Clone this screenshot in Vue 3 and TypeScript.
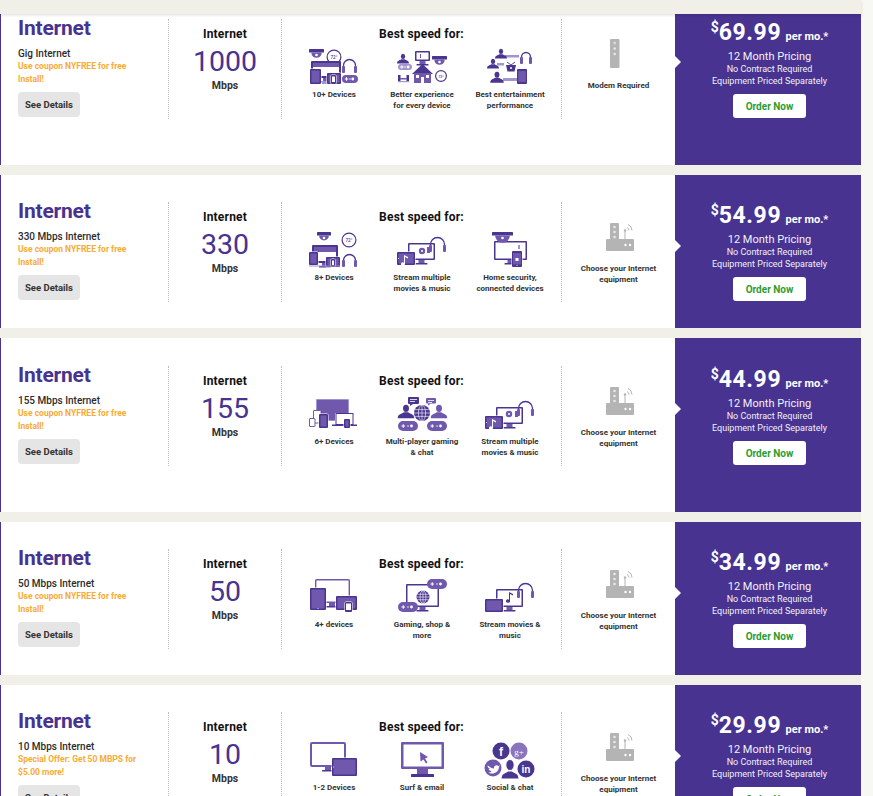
<script setup lang="ts">
type Use = { icon: string; label: string[] }
type Plan = {
  name: string
  offer: string[]
  speed: string
  uses: Use[]
  modem: boolean
  price: string
  tall?: boolean
}

const D = '#4a3590'
const M = '#7058ad'
const L = '#a294cc'
const W = '#fff'
const G = '#b4b4b4'

const r = (x: number, y: number, w: number, h: number, f = D, rx = 0) =>
  `<rect x="${x}" y="${y}" width="${w}" height="${h}" rx="${rx}" fill="${f}"/>`
const c = (x: number, y: number, rad: number, f = D) => `<circle cx="${x}" cy="${y}" r="${rad}" fill="${f}"/>`

const stand = (cx: number, y: number) => r(cx - 3, y, 6, 3, M) + r(cx - 6, y + 3, 12, 1.5, D, 0.5)
const monitor = (x: number, y: number, w: number, h: number, inner = W, frame = D) =>
  r(x, y, w, h, frame, 1) + r(x + 1.5, y + 1.5, w - 3, h - 3, inner) + stand(x + w / 2, y + h)
const tablet = (x: number, y: number, w: number, h: number) =>
  r(x - 0.5, y - 0.5, w + 1, h + 1, W, 1.5) + r(x, y, w, h, D, 1) + r(x + 1.5, y + 1.5, w - 3, h - 3, M)
const phone = (x: number, y: number, w: number, h: number) =>
  r(x - 0.5, y - 0.5, w + 1, h + 1, W, 1.5) + r(x, y, w, h, D, 1) + r(x + 1, y + 1.5, w - 2, h - 3.5, W)
const headset = (x: number, y: number, w: number, h: number) =>
  `<path d="M${x + 1.5} ${y + h - 3}V${y + w / 2}a${w / 2 - 1.5} ${w / 2 - 1.5} 0 0 1 ${w - 3} 0V${y + h - 3}" fill="none" stroke="${D}" stroke-width="1.3"/>` +
  r(x, y + h - 7, 3, 7, M, 1) + r(x + w - 3, y + h - 7, 3, 7, M, 1)
const dome = (x: number, y: number, w: number) =>
  r(x, y, w, 3.5, D, 0.5) + `<path d="M${x + w * 0.15} ${y + 3.5}h${w * 0.7}a${w * 0.35} ${w * 0.35} 0 0 1 -${w * 0.7} 0z" fill="${M}"/>` + c(x + w / 2, y + 6, 1.3, W)
const thermo = (x: number, y: number, rad: number) =>
  `<circle cx="${x}" cy="${y}" r="${rad - 0.6}" fill="#fff" stroke="${D}" stroke-width="1.2"/><text x="${x}" y="${y + 1.6}" font-family="Roboto" font-size="${rad * 0.62}" font-weight="500" text-anchor="middle" fill="${D}">72°</text>`
const pad = (x: number, y: number, w: number, h: number, f = M) =>
  r(x, y, w, h, f, h / 2) + r(x + h * 0.35, y + h / 2 - 0.5, 3.5, 1, W) + r(x + h * 0.35 + 1.25, y + h / 2 - 1.75, 1, 3.5, W) + c(x + w - h * 0.65, y + h / 2, 1.4, W) + r(x + w / 2 - 1, y + h / 2 - 0.4, 2, 0.8, W)
const person = (cx: number, y: number, s: number, f = D) =>
  `<ellipse cx="${cx}" cy="${y + s * 0.3}" rx="${s * 0.27}" ry="${s * 0.33}" fill="${f}"/><path d="M${cx - s * 0.75} ${y + s * 1.2}c0-${s * 0.38} ${s * 0.3}-${s * 0.38} ${s * 0.55}-${s * 0.55}h${s * 0.4}c${s * 0.25} ${s * 0.17} ${s * 0.55} ${s * 0.17} ${s * 0.55} ${s * 0.55}z" fill="${f}"/>`
const globe = (x: number, y: number, rad: number, f = D) =>
  c(x, y, rad, f) +
  `<g fill="none" stroke="#fff" stroke-width=".6"><ellipse cx="${x}" cy="${y}" rx="${rad * 0.45}" ry="${rad}"/><path d="M${x} ${y - rad}V${y + rad}M${x - rad} ${y}H${x + rad}M${x - rad * 0.9} ${y - rad * 0.42}H${x + rad * 0.9}M${x - rad * 0.9} ${y + rad * 0.42}H${x + rad * 0.9}"/></g>`
const disc = (x: number, y: number) => c(x, y, 3.2, M) + c(x, y, 1, W)
const note = (x: number, y: number, f = M) =>
  `<path d="M${x} ${y}l4 2v1.4l-3-1.4v7a2 1.6 0 1 1 -1-1.3z" fill="${f}"/>`
const bubble = (x: number, y: number, w: number, h: number, f = M) =>
  r(x, y, w, h, f, 1) + `<path d="M${x + 2} ${y + h}v2l3-2z" fill="${f}"/>` + r(x + 2, y + 2, w - 4, 0.8, W) + r(x + 2, y + 4, w - 6, 0.8, W)

const streamIcon = (inner: string) =>
  monitor(13, 12, 27, 17) + inner + tablet(2, 21, 18, 13) + c(3.4, 27.5, 0.5, W) + headset(34, 5, 17, 16)

const icons: Record<string, string> = {
  devices10:
    dome(2, 1, 15) + thermo(27, 9, 7.5) + headset(35, 10, 15, 15) +
    r(4, 13, 30, 17, D, 1) + r(6, 15, 26, 4, M) + r(6, 19, 26, 9, W) + stand(19, 30) +
    tablet(3, 21, 11, 15) + r(15, 33, 6, 3, L) + tablet(20, 25, 14, 11) + phone(24, 27, 5, 9) + pad(35, 27, 16, 8),
  better:
    person(8, 6, 8) + monitor(20, 3, 15, 10) + r(25, 6, 1, 4, M) + dome(37, 8, 15) + pad(3, 16, 14, 6, L) +
    `<path d="M17 26L27.5 16 38 26z" fill="${D}"/>` + r(19, 25, 17, 10, M) + r(21, 27, 3, 3, W) + r(31, 27, 3, 3, W) + r(26, 29, 3, 6, W) +
    thermo(46, 28, 6) + r(3, 27, 2.5, 7, D) + r(11.5, 27, 2.5, 7, D) + r(5, 30, 7, 1.5, M) + r(3, 33, 11, 1.2, L),
  entertainment:
    r(22, 7, 14, 2.5, L) + r(14, 15, 7, 2.5, L) + r(20, 30, 14, 3, L) +
    person(18, 1, 8) + person(10, 11, 8) + person(14, 24, 9) +
    `<path d="M24 14l4 3 4-3" fill="none" stroke="${D}" stroke-width=".9"/>` + `<path d="M23 17h10l-1.5 6.5h-7z" fill="${D}"/>` + c(28, 20, 1, W) +
    headset(37, 3, 12, 13) + r(34, 21, 10, 15, D, 1) + r(35.2, 23, 7.6, 11, M),
  devices8:
    dome(10, 1, 14) + thermo(42, 9, 7.5) + r(5, 14, 26, 18, D, 1) + r(7, 16, 22, 5, M) + r(7, 21, 22, 9, W) + stand(18, 32) +
    tablet(2, 21, 9, 13) + tablet(19, 26, 14, 10) + phone(24, 28, 4, 8) + headset(35, 22, 15, 14) + r(2, 34.5, 31, 1, L),
  stream: streamIcon(disc(27, 20) + r(32, 16, 3, 6, M)) + note(9, 24, W),
  security:
    monitor(11, 10, 33, 19) + dome(9, 1, 21) + r(35, 14, 2, 4, L) + r(28.5, 19.5, 11, 17, W, 1.5) + r(29, 20, 10, 16, D, 1) + r(30, 22, 8, 11.5, M) + r(32.5, 27, 3, 3, W) + c(34, 34.5, 0.5, W),
  devices6:
    r(9, 4, 33, 22, L, 1) + r(10, 5, 31, 20, M) + r(6, 15, 8, 13, W) + `<rect x="6.5" y="15.5" width="7.5" height="12.5" rx=".5" fill="#fff" stroke="${D}" stroke-width=".8"/>` +
    `<rect x="2.5" y="23.5" width="5.5" height="8" rx=".5" fill="#fff" stroke="${D}" stroke-width=".8"/>` + tablet(12, 19, 9, 14) +
    r(28, 18, 19, 12, W) + `<rect x="29" y="18.5" width="17" height="11" fill="#fff" stroke="${D}" stroke-width="1"/>` + r(25, 29.5, 25, 1.5, D) + tablet(37, 24, 6, 9),
  multi:
    person(11, 10, 11) + globe(27, 18, 8) + person(44, 10, 11, M) + pad(3, 26, 20, 10) + pad(32, 26, 20, 10) + bubble(13, 2, 11, 7, D) + bubble(31, 3, 10, 5.5),
  streamAlt: streamIcon(disc(26, 19) + r(32, 16, 3, 6, M)) + note(9, 24, W),
  devices4:
    `<rect x="8.7" y="1.7" width="33.6" height="22.6" rx="1" fill="#fff" stroke="${M}" stroke-width="1.4"/>` + stand(25, 25) +
    tablet(3, 10, 16, 22) + c(11, 30.5, 0.5, W) + tablet(29, 18, 21, 14) + phone(38, 24, 7, 10),
  gaming:
    monitor(11, 6, 33, 23) + globe(28, 19, 6.5) + pad(32, 1, 20, 10) + pad(3, 24, 20, 10),
  movies: monitor(13, 11, 27, 18) + note(26, 14, D) + tablet(2, 21, 18, 13) + headset(34, 4, 17, 16),
  devices2:
    `<rect x="4" y="2" width="34" height="23" rx="1" fill="#fff" stroke="${M}" stroke-width="2"/>` + stand(21, 26) + tablet(25, 17, 25, 18) + c(26.5, 26, 0.5, W),
  surf:
    r(6, 1, 43, 27, M, 1) + r(8.5, 3.5, 38, 22, W) + r(22, 28, 11, 5, M) + r(16, 33, 23, 3, D, 0.5) +
    `<path d="M25 11l8 5-3 1.5 2.5 4-1.5 1-2.5-4-3 2z" fill="${M}"/>`,
  social:
    c(18, 10, 8.5) + c(36, 10, 8.5, '#8a74bb') + c(10, 27, 8.5, M) + c(43, 28, 8.5) +
    `<text x="18" y="14.5" font-family="Liberation Sans" font-size="12" font-weight="700" text-anchor="middle" fill="#fff">f</text>` +
    `<text x="36" y="13.5" font-family="Liberation Serif" font-size="9" text-anchor="middle" fill="#fff">g+</text>` +
    `<text x="43" y="31.5" font-family="Liberation Sans" font-size="10" font-weight="700" text-anchor="middle" fill="#fff">in</text>` +
    `<path d="M5 24.5c2 2 4 3 6 3-.6-2.5 2.5-4.5 4.5-2.5l1.5-.5-1 1.5c0 5-6 8.5-11 5.5 1.5 0 3-.5 3.5-1.5-1.5 0-2.5-1-3-2 .5 0 1 0 1.5-.2-1.5-.6-2.5-2-2.5-3.3z" fill="#fff"/>` +
    `<g stroke="#fff" stroke-width="1"><ellipse cx="27" cy="24" rx="4.2" ry="5.5" fill="${D}"/><path d="M18 38c0-6 5-6 7-8h4c2 2 7 2 7 8z" fill="${D}"/></g>`,
  modem: r(11, 1, 9.5, 29, G, 1) + c(15.7, 5, 1.5, '#d8d8d8') + c(15.7, 10.5, 1.3, '#e8e8e8') + c(15.7, 16, 1.3, '#e8e8e8'),
  router:
    r(11, 2, 9, 28, G, 1) + r(7, 18, 28, 12, G, 1) + c(15.5, 6, 1.3, '#e8e8e8') + c(15.5, 11, 1.3, '#e8e8e8') + c(15.5, 16, 1.3, '#e8e8e8') +
    c(26.5, 24, 1.2, W) + c(31, 24, 1.2, W) + r(25.5, 10, 1, 8, G) + c(26, 9.5, 1.2, G) +
    `<path d="M28 6.5a3.5 3.5 0 0 1 2 3M29 3.5a6.5 6.5 0 0 1 4 6" fill="none" stroke="${G}" stroke-width="1"/>`,
}

const coupon = ['Use coupon NYFREE for free', 'Install!']

const plans: Plan[] = [
  {
    name: 'Gig Internet', offer: coupon, speed: '1000', modem: true, price: '69.99', tall: true,
    uses: [
      { icon: 'devices10', label: ['10+ Devices'] },
      { icon: 'better', label: ['Better experience', 'for every device'] },
      { icon: 'entertainment', label: ['Best entertainment', 'performance'] },
    ],
  },
  {
    name: '330 Mbps Internet', offer: coupon, speed: '330', modem: false, price: '54.99',
    uses: [
      { icon: 'devices8', label: ['8+ Devices'] },
      { icon: 'stream', label: ['Stream multiple', 'movies & music'] },
      { icon: 'security', label: ['Home security,', 'connected devices'] },
    ],
  },
  {
    name: '155 Mbps Internet', offer: coupon, speed: '155', modem: false, price: '44.99', tall: true,
    uses: [
      { icon: 'devices6', label: ['6+ Devices'] },
      { icon: 'multi', label: ['Multi-player gaming', '& chat'] },
      { icon: 'streamAlt', label: ['Stream multiple', 'movies & music'] },
    ],
  },
  {
    name: '50 Mbps Internet', offer: coupon, speed: '50', modem: false, price: '34.99',
    uses: [
      { icon: 'devices4', label: ['4+ devices'] },
      { icon: 'gaming', label: ['Gaming, shop &', 'more'] },
      { icon: 'movies', label: ['Stream movies &', 'music'] },
    ],
  },
  {
    name: '10 Mbps Internet', offer: ['Special Offer: Get 50 MBPS for', '$5.00 more!'], speed: '10', modem: false, price: '29.99',
    uses: [
      { icon: 'devices2', label: ['1-2 Devices'] },
      { icon: 'surf', label: ['Surf & email'] },
      { icon: 'social', label: ['Social & chat'] },
    ],
  },
]
</script>

<template>
  <div class="page">
    <div class="topband"></div>
    <div class="list">
      <section v-for="plan in plans" :key="plan.speed" class="row" :class="{ tall: plan.tall }">
        <div class="info">
          <div class="col plan">
            <h2>Internet</h2>
            <div class="plan-name">{{ plan.name }}</div>
            <div class="offer">
              <div v-for="line in plan.offer" :key="line">{{ line }}</div>
            </div>
            <button class="details">See Details</button>
          </div>
          <div class="col speed">
            <div class="col-title">Internet</div>
            <div class="number">{{ plan.speed }}</div>
            <div class="unit">Mbps</div>
          </div>
          <div class="col best">
            <div class="col-title">Best speed for:</div>
            <div class="uses">
              <div v-for="use in plan.uses" :key="use.icon" class="use">
                <svg width="54" height="38" viewBox="0 0 54 38" v-html="icons[use.icon]"></svg>
                <div class="caption">
                  <div v-for="line in use.label" :key="line">{{ line }}</div>
                </div>
              </div>
            </div>
          </div>
          <div class="equipment">
            <svg width="40" height="36" viewBox="0 0 40 36" v-html="icons[plan.modem ? 'modem' : 'router']"></svg>
            <div v-if="plan.modem" class="caption">Modem Required</div>
            <div v-else class="caption">
              <div>Choose your Internet</div>
              <div>equipment</div>
            </div>
          </div>
        </div>
        <div class="price">
          <div class="amount"><sup>$</sup>{{ plan.price }} <small>per mo.*</small></div>
          <div class="term">12 Month Pricing</div>
          <div class="note">No Contract Required</div>
          <div class="note">Equipment Priced Separately</div>
          <button class="order">Order Now</button>
        </div>
      </section>
    </div>
  </div>
</template>

<style>
html, body {
  margin: 0;
  overflow: hidden;
}
</style>

<style scoped>
.page {
  position: relative;
  height: 796px;
  overflow: hidden;
  background: #f7f7f4;
  font-family: Roboto, "Liberation Sans", sans-serif;
}
.topband {
  position: absolute;
  top: 0;
  left: 0;
  width: 861px;
  height: 14px;
  background: #f1f0e8;
  box-shadow: 0 1px 3px rgba(0, 0, 0, 0.14);
  z-index: 2;
}
.list {
  width: 861px;
  margin-top: -9px;
  display: flex;
  flex-direction: column;
  gap: 10px;
  background: #f1f0e8;
}
.row {
  display: flex;
  flex: none;
  height: 153px;
  box-sizing: border-box;
  border-left: 1px solid #483391;
  background: #fff;
}
.row.tall {
  height: 174px;
}
.info {
  flex: 1;
  display: flex;
  align-items: flex-start;
  padding-top: 27px;
}
.tall .info {
  padding-top: 28px;
}
.col {
  height: 100px;
  box-sizing: border-box;
  border-right: 1px dotted #bdbdbd;
}
.plan {
  width: 168px;
  padding-left: 17px;
}
h2 {
  margin: -2px 0 0;
  font-size: 21px;
  line-height: 22px;
  font-weight: 700;
  letter-spacing: -0.2px;
  color: #483391;
}
.plan-name {
  margin-top: 8px;
  font-size: 10px;
  line-height: 13px;
  font-weight: 500;
  color: #2b2b2b;
}
.offer {
  font-size: 8.5px;
  line-height: 13px;
  font-weight: 700;
  color: #f9ab33;
}
.details {
  display: block;
  margin-top: 6px;
  width: 62px;
  height: 25px;
  padding: 0;
  border: 0;
  border-radius: 4px;
  background: #e5e5e5;
  font: 700 9.5px Roboto, sans-serif;
  color: #333;
}
.speed {
  width: 113px;
  text-align: center;
}
.col-title {
  padding-top: 8px;
  font-size: 12px;
  line-height: 14px;
  font-weight: 700;
  letter-spacing: 0.2px;
  color: #111;
}
.number {
  margin-top: 4px;
  font-size: 28.5px;
  line-height: 34px;
  font-weight: 400;
  color: #483391;
}
.unit {
  font-size: 10.5px;
  line-height: 13px;
  font-weight: 700;
  color: #333;
}
.best {
  width: 280px;
  text-align: center;
}
.uses {
  display: flex;
  margin-top: 7px;
  padding-left: 8px;
}
.use {
  width: 88px;
}
svg {
  display: block;
  margin: 0 auto;
}
.caption {
  font-size: 8px;
  line-height: 11px;
  font-weight: 700;
  color: #333;
}
.use .caption {
  margin-top: 3px;
}
.equipment {
  width: 113px;
  padding-top: 19px;
  text-align: center;
}
.equipment .caption {
  margin-top: 6px;
}
.price {
  position: relative;
  width: 186px;
  padding: 27px 0 0 3px;
  box-sizing: border-box;
  background: #483391;
  color: #f2f0fa;
  text-align: center;
}
.tall .price {
  padding-top: 28px;
}
.price::before {
  content: "";
  position: absolute;
  left: 0;
  top: 65px;
  border-left: 6px solid #fff;
  border-top: 6px solid transparent;
  border-bottom: 6px solid transparent;
}
.amount {
  font-size: 23px;
  line-height: 28px;
  font-weight: 700;
  letter-spacing: 0.6px;
  color: #fff;
}
.amount sup {
  font-size: 14px;
  line-height: 0;
  vertical-align: 8px;
  letter-spacing: 0;
}
.amount small {
  margin-left: -2px;
  font-size: 11px;
  letter-spacing: 0;
}
.term {
  margin-top: -1px;
  font-size: 11px;
  line-height: 14px;
}
.note {
  font-size: 9px;
  line-height: 12px;
}
.term + .note {
  margin-top: -1px;
}
.order {
  display: block;
  margin: 7px auto 0;
  width: 73px;
  height: 24px;
  padding: 0;
  border: 0;
  border-radius: 3px;
  background: #fff;
  font: 700 10px Roboto, sans-serif;
  color: #2d9c30;
}
</style>
